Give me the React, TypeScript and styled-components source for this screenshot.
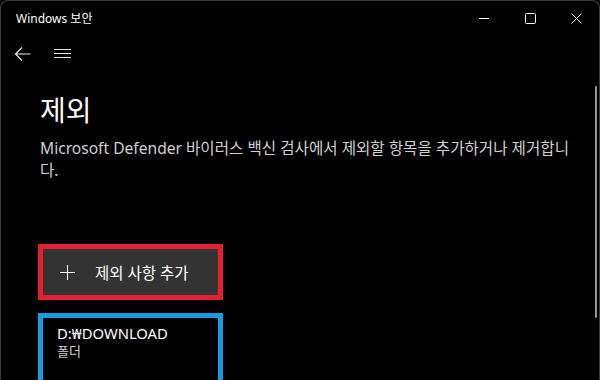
import React from 'react';
import styled, { createGlobalStyle } from 'styled-components';

const GlobalStyle = createGlobalStyle`
  html, body {
    margin: 0;
    padding: 0;
    background: #000;
  }
  * {
    box-sizing: border-box;
  }
`;

const App = () => {
  return (
    <>
      <GlobalStyle />
      <Window>
        <TitleBar>
          <AppTitle>Windows 보안</AppTitle>
          <Controls>
            <ControlButton aria-label="minimize">
              <svg width="10" height="10" viewBox="0 0 10 10">
                <path d="M0 5.5h10" stroke="#fff" strokeWidth="1" />
              </svg>
            </ControlButton>
            <ControlButton aria-label="maximize">
              <svg width="11" height="11" viewBox="0 0 11 11">
                <rect x="0.5" y="0.5" width="10" height="10" rx="1" fill="none" stroke="#fff" strokeWidth="1" />
              </svg>
            </ControlButton>
            <ControlButton aria-label="close">
              <svg width="11" height="11" viewBox="0 0 11 11">
                <path d="M0.5 0.5l10 10M10.5 0.5l-10 10" stroke="#fff" strokeWidth="1" />
              </svg>
            </ControlButton>
          </Controls>
        </TitleBar>
        <NavBar>
          <NavButton aria-label="back">
            <svg width="17" height="16" viewBox="0 0 17 16">
              <path d="M16.5 8H1.5M8 1.5L1.5 8L8 14.5" fill="none" stroke="#e6e6e6" strokeWidth="1.2" />
            </svg>
          </NavButton>
          <NavButton aria-label="menu">
            <svg width="17" height="10" viewBox="0 0 17 10">
              <path d="M0 0.5h17M0 4.5h17M0 8.5h17" stroke="#e6e6e6" strokeWidth="1.1" />
            </svg>
          </NavButton>
        </NavBar>
        <Body>
          <Content>
            <PageTitle>제외</PageTitle>
            <Description>
              Microsoft Defender 바이러스 백신 검사에서 제외할 항목을 추가하거나 제거합니다.
            </Description>
            <Highlight $color="#e3202b">
              <AddButton>
                <svg width="15" height="15" viewBox="0 0 15 15">
                  <path d="M7.5 0v15M0 7.5h15" stroke="#fff" strokeWidth="1.1" />
                </svg>
                <span>제외 사항 추가</span>
              </AddButton>
            </Highlight>
            <Highlight $color="#1a9be0" $gap={13}>
              <ItemCard>
                <ItemName>D:₩DOWNLOAD</ItemName>
                <ItemType>폴더</ItemType>
              </ItemCard>
            </Highlight>
          </Content>
          <ScrollThumb />
        </Body>
      </Window>
    </>
  );
};

const Window = styled.div`
  width: 600px;
  height: 380px;
  display: flex;
  flex-direction: column;
  background: #000;
  border: 1px solid #3c3c3c;
  border-bottom: none;
  border-radius: 8px 8px 0 0;
  overflow: hidden;
  font-family: 'Noto Sans', 'Noto Sans CJK KR', sans-serif;
  color: #fff;
`;

const TitleBar = styled.div`
  height: 34px;
  flex-shrink: 0;
  display: flex;
  align-items: center;
  justify-content: space-between;
  padding-left: 15px;
`;

const AppTitle = styled.span`
  font-size: 12px;
  color: #fff;
`;

const Controls = styled.div`
  display: flex;
  height: 100%;
`;

const ControlButton = styled.div`
  width: 46px;
  height: 100%;
  display: flex;
  align-items: center;
  justify-content: center;
`;

const NavBar = styled.div`
  height: 38px;
  flex-shrink: 0;
  display: flex;
  align-items: center;
  padding-left: 1px;
`;

const NavButton = styled.div`
  width: 40px;
  height: 38px;
  display: flex;
  align-items: center;
  justify-content: center;
`;

const Body = styled.div`
  position: relative;
  flex: 1;
  min-height: 0;
  padding-right: 8px;
`;

const Content = styled.div`
  padding: 17px 0 0 39px;
  display: flex;
  flex-direction: column;
  align-items: flex-start;
`;

const PageTitle = styled.h1`
  margin: 0;
  font-size: 28px;
  font-weight: 400;
  line-height: 40px;
  color: #fff;
`;

const Description = styled.p`
  margin: 7px 0 63px;
  width: 545px;
  font-size: 15.6px;
  line-height: 22px;
  color: #d0d0d0;
`;

const Highlight = styled.div<{ $color: string; $gap?: number }>`
  flex-shrink: 0;
  width: 185px;
  margin-left: -2px;
  border: 5px solid ${(p) => p.$color};
  margin-top: ${(p) => p.$gap ?? 0}px;
`;

const AddButton = styled.div`
  height: 46px;
  display: flex;
  align-items: center;
  gap: 20px;
  padding-left: 17px;
  background: #333;
  font-size: 15.5px;
  color: #fff;
`;

const ItemCard = styled.div`
  height: 80px;
  padding: 6px 0 0 14px;
  display: flex;
  flex-direction: column;
`;

const ItemName = styled.span`
  font-size: 14.8px;
  line-height: 19px;
  color: #fff;
`;

const ItemType = styled.span`
  font-size: 13px;
  line-height: 16px;
  color: #cfcfcf;
`;

const ScrollThumb = styled.div`
  position: absolute;
  top: 13px;
  right: 2px;
  width: 2px;
  height: 232px;
  background: #969696;
  border-radius: 1px;
`;

export default App;
